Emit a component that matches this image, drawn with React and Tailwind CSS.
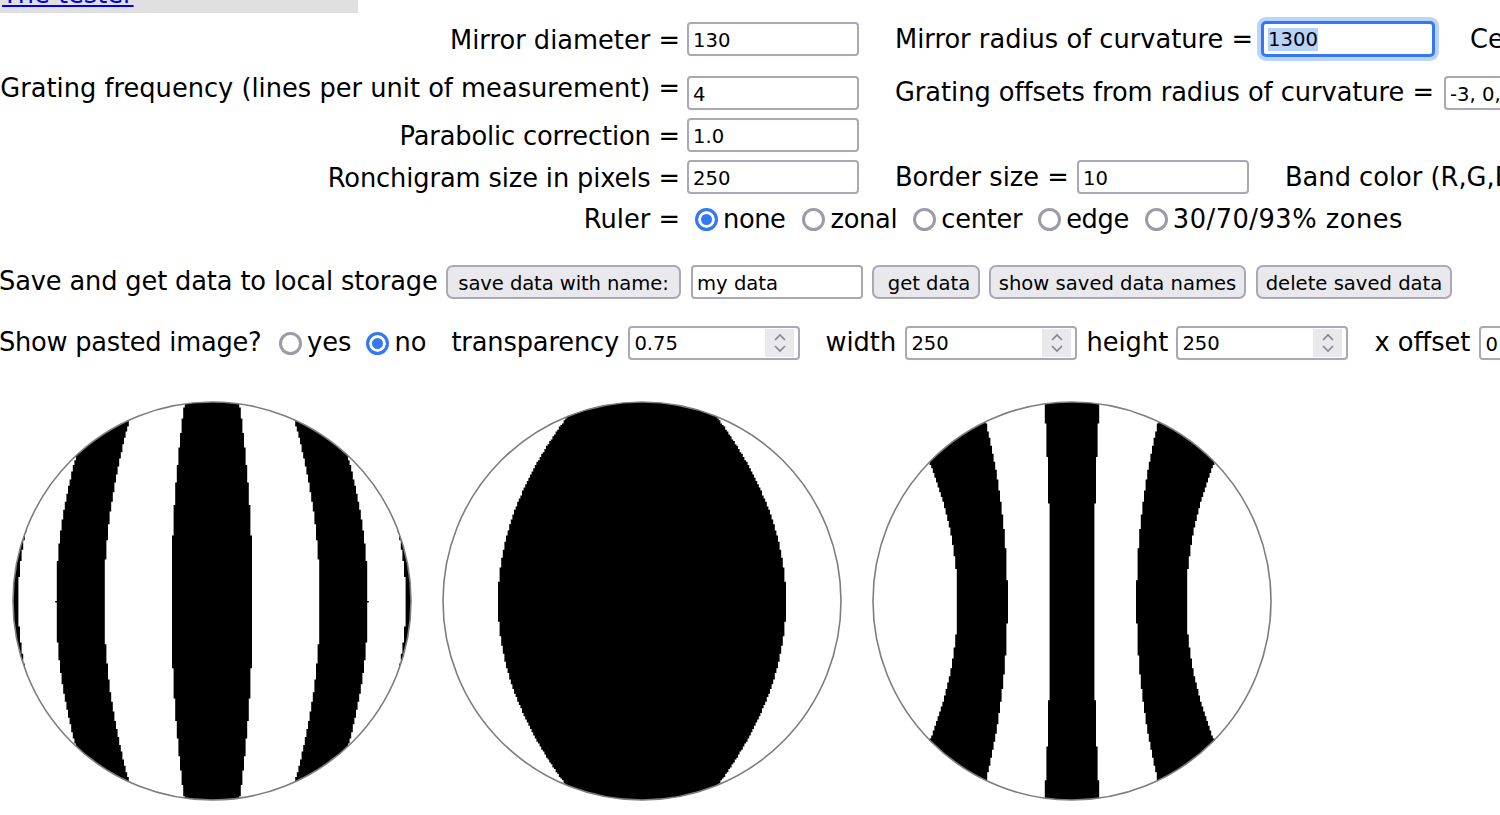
import { useEffect, useRef } from "react";

const inputClass =
  "h-[34px] shrink-0 rounded-[4px] border-2 border-[#a9a8b4] bg-white px-[4px] pt-[2px] text-[19.6px] text-black outline-none";
const buttonClass =
  "h-[34px] shrink-0 rounded-[7px] border-2 border-[#a9a8b4] bg-[#e9e9ed] pt-[2px] text-[19.6px] text-black";
const radioClass =
  "m-0 h-[23px] w-[23px] shrink-0 appearance-none rounded-full border-[3px] border-[#9c9ba7] bg-white checked:border-[#3478f6] checked:bg-[#3478f6] checked:shadow-[inset_0_0_0_3px_white]";

function Field({ value, width = "w-[172px]", className = "" }) {
  return <input readOnly defaultValue={value} className={`${inputClass} ${width} ${className}`} />;
}

function Spin({ value }) {
  return (
    <div className="flex h-[34px] w-[172px] shrink-0 items-center justify-between rounded-[4px] border-2 border-[#a9a8b4] bg-white pl-[4px] pr-[4px] text-[19.6px]">
      <span className="pt-[2px]">{value}</span>
      <span className="flex h-[28px] w-[29px] items-center justify-center bg-[#e9e9ed]">
        <svg width="14" height="20" viewBox="0 0 14 20" fill="none" stroke="#85848f" strokeWidth="1.6">
          <path d="M2 7 L7 2 L12 7" />
          <path d="M2 13 L7 18 L12 13" />
        </svg>
      </span>
    </div>
  );
}

function Radio({ label, checked, name, className = "", textClass = "" }) {
  return (
    <label className={`flex shrink-0 items-center gap-[5px] ${className}`}>
      <input type="radio" name={name} readOnly defaultChecked={checked} className={radioClass} />
      <span className={textClass}>{label}</span>
    </label>
  );
}

// edges of a fringe are a function of the height on the mirror, snapped to the
// 250 -> 400 canvas pixels so they get the same stair steps
const STEP = 1.6;
const snap = (v) => Math.round(v / STEP) * STEP;

function bandPoints(inner, outer, side) {
  const right = [];
  const left = [];
  for (let y = -200; y < 200; y += STEP) {
    const i = 200 + side * snap(inner(y));
    const o = 200 + side * snap(outer(y));
    right.push(`${o},${200 + y}`, `${o},${200 + y + STEP}`);
    left.unshift(`${i},${200 + y + STEP}`, `${i},${200 + y}`);
  }
  return [...right, ...left].join(" ");
}

function Ronchigram({ id, bands }) {
  return (
    <svg width="400" height="400" viewBox="0 0 400 400" className="shrink-0">
      <defs>
        <clipPath id={id}>
          <circle cx="200" cy="200" r="199" />
        </clipPath>
      </defs>
      <circle cx="200" cy="200" r="199" fill="white" />
      <g clipPath={`url(#${id})`} fill="black">
        {bands.flatMap((b, n) => [
          <polygon key={`r${n}`} points={bandPoints(b[0], b[1], 1)} />,
          <polygon key={`l${n}`} points={bandPoints(b[0], b[1], -1)} />,
        ])}
      </g>
      <circle cx="200" cy="200" r="199" fill="none" stroke="#7d7d7d" strokeWidth="1.6" />
    </svg>
  );
}

const zero = () => 0;

const undercorrected = [
  [zero, (y) => 40.7 - 13.2 * (y / 199) ** 2],
  [(y) => 107.8 - 25 * (y / 180) ** 2, (y) => 156 - 20 * (y / 145) ** 2],
  [(y) => 193.8 - 4.3 * (y / 53) ** 2, () => 210],
];

const atFocus = [[zero, (y) => 144 - 66 * (y / 180.8) ** 2]];

const overcorrected = [
  [zero, (y) => 21.8 + 5.7 * (y / 199) ** 2],
  [(y) => 64.5 + 21 * (y / 177.5) ** 2, (y) => 114.5 + 27.3 * (y / 137.5) ** 2],
];

export default function App() {
  const radiusRef = useRef(null);

  useEffect(() => {
    radiusRef.current.focus();
    radiusRef.current.select();
  }, []);

  return (
    <div className="h-[815px] w-[1500px] overflow-hidden bg-white font-['DejaVu_Sans',sans-serif] text-[25.7px] text-black">
      {/* cut off top of the page */}
      <div className="h-[13px] w-[358px] overflow-hidden bg-[#e0e0e0]">
        <a href="#tester" className="-mt-[21px] ml-[2px] block leading-[30px] text-[#0000ee] underline">
          The tester
        </a>
      </div>

      <div className="mt-[9px] flex h-[34px] items-center whitespace-nowrap">
        <span className="mt-[3px] w-[680px] shrink-0 text-right">Mirror diameter =</span>
        <Field value="130" className="ml-[7px]" />
        <span className="ml-[36px] w-[366px] shrink-0">Mirror radius of curvature =</span>
        <input
          ref={radiusRef}
          readOnly
          defaultValue="1300"
          className="h-[36px] w-[174px] shrink-0 rounded-[5px] border-[3px] border-[#3478f6] bg-white px-[4px] text-[19.6px] outline-none shadow-[0_0_0_4px_#b9d5fb] selection:bg-[#b5d3fb] selection:text-black"
        />
        <span className="ml-[35px] shrink-0">Center</span>
      </div>

      <div className="mt-[20px] flex h-[34px] items-center whitespace-nowrap">
        <span className="mb-[10px] w-[680px] shrink-0 text-right">Grating frequency (lines per unit of measurement) =</span>
        <Field value="4" className="ml-[7px]" />
        <span className="ml-[36px] mb-[2px] w-[549px] shrink-0 tracking-[-0.05px]">Grating offsets from radius of curvature =</span>
        <Field value="-3, 0, 3" />
      </div>

      <div className="mt-[8px] flex h-[34px] items-center whitespace-nowrap">
        <span className="mt-[3px] w-[680px] shrink-0 text-right tracking-[-0.15px]">Parabolic correction =</span>
        <Field value="1.0" className="ml-[7px]" />
      </div>

      <div className="mt-[8px] flex h-[34px] items-center whitespace-nowrap">
        <span className="mt-[3px] w-[680px] shrink-0 text-right tracking-[-0.12px]">Ronchigram size in pixels =</span>
        <Field value="250" className="ml-[7px]" />
        <span className="ml-[36px] w-[182px] shrink-0">Border size =</span>
        <Field value="10" />
        <span className="ml-[36px] shrink-0">Band color (R,G,B)</span>
      </div>

      <div className="mt-[10px] flex h-[30px] items-center whitespace-nowrap">
        <span className="w-[680px] shrink-0 text-right">Ruler =</span>
        <Radio name="ruler" label="none" checked className="ml-[15px]" textClass="tracking-[-0.4px]" />
        <Radio name="ruler" label="zonal" className="ml-[17px]" textClass="tracking-[-0.3px]" />
        <Radio name="ruler" label="center" className="ml-[16px]" textClass="tracking-[-0.3px]" />
        <Radio name="ruler" label="edge" className="ml-[16px]" textClass="tracking-[-0.4px]" />
        <Radio name="ruler" label="30/70/93% zones" className="ml-[16px]" textClass="tracking-[0.5px]" />
      </div>

      <div className="mt-[31px] flex h-[34px] items-center whitespace-nowrap">
        <span className="-ml-[1px] mb-[2px] w-[447px] shrink-0 tracking-[-0.15px]">Save and get data to local storage</span>
        <button className={`${buttonClass} w-[235px] tracking-[-0.1px]`}>save data with name:</button>
        <Field value="my data" className="ml-[10px]" />
        <button className={`${buttonClass} ml-[9px] w-[108px] pl-[6px]`}>get data</button>
        <button className={`${buttonClass} ml-[9px] w-[257px]`}>show saved data names</button>
        <button className={`${buttonClass} ml-[10px] w-[196px]`}>delete saved data</button>
      </div>

      <div className="mt-[27px] flex h-[34px] items-center whitespace-nowrap">
        <span className="-ml-[1px] mb-[2px] w-[280px] shrink-0 tracking-[-0.25px]">Show pasted image?</span>
        <Radio name="pasted" label="yes" textClass="mb-[2px]" />
        <Radio name="pasted" label="no" checked className="ml-[15px]" textClass="mb-[2px]" />
        <span className="ml-[25px] mb-[2px] w-[177px] shrink-0 tracking-[-0.15px]">transparency</span>
        <Spin value="0.75" />
        <span className="ml-[25px] mb-[2px] w-[80px] shrink-0">width</span>
        <Spin value="250" />
        <span className="ml-[9px] mb-[2px] w-[90px] shrink-0">height</span>
        <Spin value="250" />
        <span className="ml-[26px] mb-[2px] w-[105px] shrink-0">x offset</span>
        <Field value="0" />
      </div>

      <div className="ml-[12px] mt-[41px] flex gap-[30px]">
        <Ronchigram id="under" bands={undercorrected} />
        <Ronchigram id="focus" bands={atFocus} />
        <Ronchigram id="over" bands={overcorrected} />
      </div>
    </div>
  );
}
